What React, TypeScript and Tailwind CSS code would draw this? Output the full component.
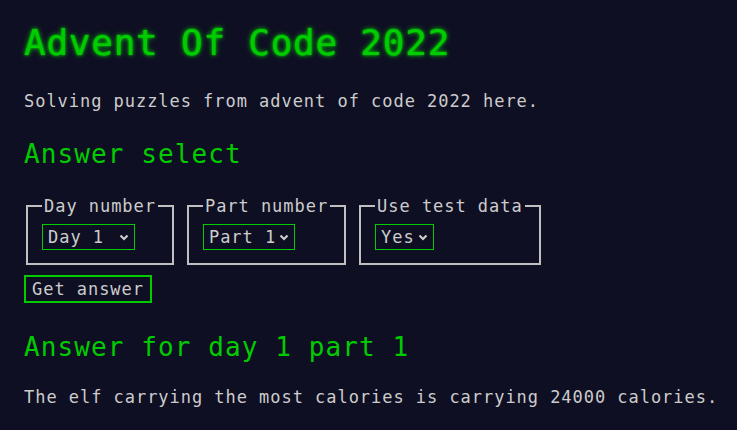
import { useState } from 'react';

const days = Array.from({ length: 25 }, (_, i) => i + 1);

function Chevron({ className }: { className?: string }) {
  return (
    <svg width="10" height="7" viewBox="0 0 10 7" className={className} aria-hidden="true">
      <path d="M1.5 1.5l3.5 3.5l3.5-3.5" fill="none" stroke="#cccccc" strokeWidth="2.2" />
    </svg>
  );
}

function Field({ label, children }: { label: string; children: React.ReactNode }) {
  return (
    <fieldset className="mx-[2px] border-2 border-[#c0c0c0] px-[14px] pt-[6px] pb-[13px]">
      <legend className="px-[2px] leading-[24px]">{label}</legend>
      {children}
    </fieldset>
  );
}

export default function App() {
  const [day, setDay] = useState(1);
  const [part, setPart] = useState(1);
  const [useTest, setUseTest] = useState('yes');
  const [shown, setShown] = useState({ day: 1, part: 1 });

  return (
    <div className="min-h-screen bg-[#0f0f23] pl-6 pt-[23px] pb-6 font-['DejaVu_Sans_Mono',monospace] text-[17px] tracking-[0.96px] text-[#cccccc]">
      <h1 className="text-[36px] leading-[40px] tracking-[0.75px] text-[#00cc00] [text-shadow:0_0_2px_#00cc00,0_0_5px_#00cc00]">
        Advent Of Code 2022
      </h1>
      <p className="mt-[26px] leading-[24px]">Solving puzzles from advent of code 2022 here.</p>

      <h2 className="mt-[25px] text-[26px] leading-[32px] tracking-[1.1px] text-[#00cc00]">Answer select</h2>

      <div className="mt-[24px] flex items-start gap-[9px]">
        <Field label="Day number">
          <div className="flex h-[26px] w-fit items-center border border-[#00cc00] px-[5px]">
            <select
              value={day}
              onChange={(e) => setDay(Number(e.target.value))}
              className="w-[67px] appearance-none bg-transparent leading-[24px] outline-none"
            >
              {days.map((d) => (
                <option key={d} value={d} className="bg-[#0f0f23]">
                  Day {d}
                </option>
              ))}
            </select>
            <Chevron className="ml-[4px]" />
          </div>
        </Field>

        <Field label="Part number">
          <div className="flex h-[26px] w-fit items-center border border-[#00cc00] px-[5px]">
            <select
              value={part}
              onChange={(e) => setPart(Number(e.target.value))}
              className="w-[67px] appearance-none bg-transparent leading-[24px] outline-none"
            >
              <option value={1} className="bg-[#0f0f23]">Part 1</option>
              <option value={2} className="bg-[#0f0f23]">Part 2</option>
            </select>
            <Chevron className="ml-[3px]" />
          </div>
        </Field>

        <Field label="Use test data">
          <div className="flex h-[26px] w-fit items-center border border-[#00cc00] px-[5px]">
            <select
              value={useTest}
              onChange={(e) => setUseTest(e.target.value)}
              className="w-[34px] appearance-none bg-transparent leading-[24px] outline-none"
            >
              <option value="yes" className="bg-[#0f0f23]">Yes</option>
              <option value="no" className="bg-[#0f0f23]">No</option>
            </select>
            <Chevron className="ml-[3px]" />
          </div>
        </Field>
      </div>

      <div className="mt-[10px]">
        <button
          onClick={() => setShown({ day, part })}
          className="h-[28px] border-2 border-[#00cc00] px-[6px] leading-[24px]"
        >
          Get answer
        </button>
      </div>

      <h2 className="mt-[28px] text-[26px] leading-[32px] tracking-[1.1px] text-[#00cc00]">
        Answer for day {shown.day} part {shown.part}
      </h2>
      <p className="mt-[22px] leading-[24px]">
        The elf carrying the most calories is carrying 24000 calories.
      </p>
    </div>
  );
}
